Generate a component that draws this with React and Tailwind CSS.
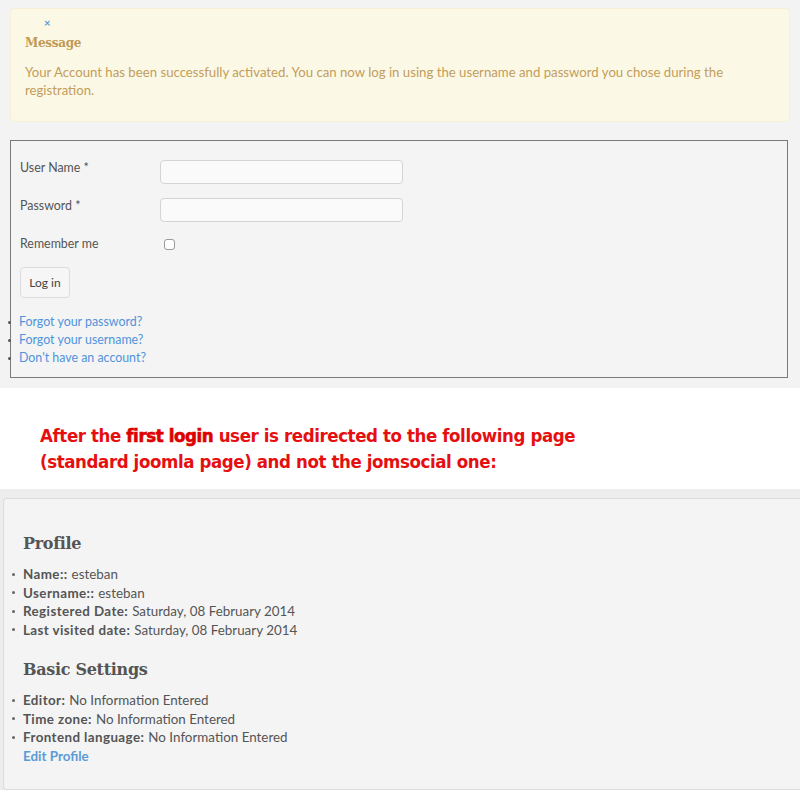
import React from 'react';

const lato = { fontFamily: 'Lato, "Open Sans", sans-serif' };
const slab = { fontFamily: '"DejaVu Serif", serif', letterSpacing: '-0.3px' };

const profileRows = [
  ['Name::', 'esteban'],
  ['Username::', 'esteban'],
  ['Registered Date:', 'Saturday, 08 February 2014'],
  ['Last visited date:', 'Saturday, 08 February 2014'],
];

const settingsRows = [
  ['Editor:', 'No Information Entered'],
  ['Time zone:', 'No Information Entered'],
  ['Frontend language:', 'No Information Entered'],
];

const InfoList = ({ rows }) => (
  <ul className="mt-[11px] leading-[18.5px]">
    {rows.map(([k, v]) => (
      <li key={k} className="flex items-center">
        <span className="w-[3px] h-[3px] rounded-full bg-[#666] -ml-[11px] mr-[8px]" />
        <b className="font-bold tracking-[0.4px] mr-[4px]">{k}</b>
        {v}
      </li>
    ))}
  </ul>
);

const App = () => {
  return (
    <div className="w-[800px] h-[790px] overflow-hidden bg-white text-[13px]" style={lato}>
      {/* top area: system message + login form */}
      <div className="bg-[#f3f3f3] pt-[8px] pb-[10px] px-[10px]">
        <div className="bg-[#fcf8e6] border border-[#f6eed6] rounded-[4px] pl-[14px] pr-4 pt-[8px] pb-[22px] text-[#c29d5c]">
          <div className="pl-[19px] text-[#5b9bd7] text-[11px] leading-[12px] font-bold">×</div>
          <h4 className="mt-[6px] text-[12px] leading-[16px] font-bold text-[#bf9a57]" style={slab}>
            Message
          </h4>
          <p className="mt-[12px] leading-[18px] text-[13.2px] pr-[30px]">
            Your Account has been successfully activated. You can now log in using the username and password you chose during the registration.
          </p>
        </div>

        <div className="mt-[18px] mr-[2px] border border-[#7a7a7a] bg-[#f4f4f4] pt-[19px] pb-[10px] text-[12.4px] text-[#555]">
          <div className="flex items-start h-[24px]">
            <label className="w-[149px] pl-[9px] leading-[16px]">User Name *</label>
            <div className="w-[243px] h-[24px] bg-[#fafafa] border border-[#d4d4d4] rounded-[4px]" />
          </div>
          <div className="flex items-start h-[24px] mt-[14px]">
            <label className="w-[149px] pl-[9px] leading-[16px]">Password *</label>
            <div className="w-[243px] h-[24px] bg-[#fafafa] border border-[#d4d4d4] rounded-[4px]" />
          </div>
          <div className="flex items-center h-[18px] mt-[13px]">
            <label className="w-[153px] pl-[9px]">Remember me</label>
            <div className="w-[11px] h-[11px] border border-[#9a9a9a] rounded-[3px] bg-white" />
          </div>
          <button className="ml-[9px] mt-[14px] w-[50px] h-[31px] bg-[#f6f6f6] border border-[#dcdcdc] rounded-[4px] text-[12px] text-[#444]">
            Log in
          </button>
          <ul className="mt-[15px] text-[#4f93dc] leading-[18px]">
            {['Forgot your password?', 'Forgot your username?', "Don't have an account?"].map((t) => (
              <li key={t} className="flex items-center">
                <span className="w-[3px] h-[3px] rounded-full bg-[#555] -ml-[3px] mr-[8px]" />
                {t}
              </li>
            ))}
          </ul>
        </div>
      </div>

      {/* annotation */}
      <div className="bg-white pt-[35px] pb-[14px] pl-[40px]">
        <p
          className="text-[18.5px] leading-[26px] text-[#e60f0f] font-bold tracking-[-0.4px]"
          style={{ fontFamily: '"DejaVu Sans Condensed", "DejaVu Sans", sans-serif', fontStretch: 'condensed' }}
        >
          After the <span className="text-[#dd0000]" style={{ WebkitTextStroke: '0.6px #dd0000' }}>first login</span> user is redirected to the following page
          <br />
          (standard joomla page) and not the jomsocial one:
        </p>
      </div>

      {/* profile panel */}
      <div className="bg-[#ededed] pt-[9px] pb-[6px] pl-[3px]">
        <div className="bg-[#f4f4f4] border border-[#dcdcdc] border-r-0 rounded-l-[4px] h-[292px] pl-[19px] pt-[35px] text-[13.4px] text-[#555]">
          <h3 className="text-[16px] leading-[20px] font-bold text-[#555]" style={slab}>
            Profile
          </h3>
          <InfoList rows={profileRows} />
          <h3 className="mt-[21px] text-[16px] leading-[20px] font-bold text-[#555]" style={slab}>
            Basic Settings
          </h3>
          <InfoList rows={settingsRows} />
          <a className="block leading-[18.5px] font-bold text-[#5b9bd7]">Edit Profile</a>
        </div>
      </div>
    </div>
  );
};

export default App;
